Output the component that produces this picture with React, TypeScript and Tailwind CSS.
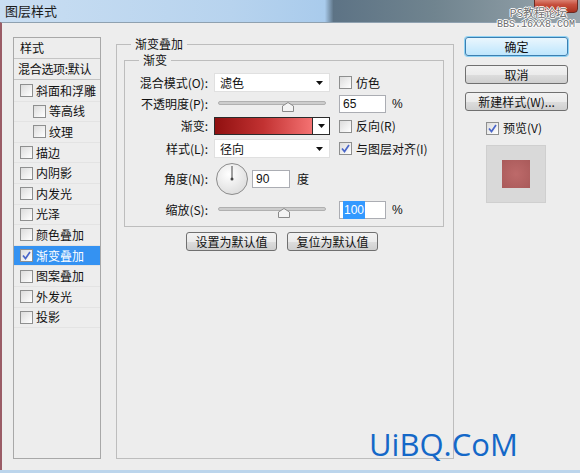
import React from 'react';

const cn = "font-['Noto_Sans_CJK_SC','Microsoft_YaHei',sans-serif]";

interface BoxProps {
  checked?: boolean;
}

const CheckBox: React.FC<BoxProps> = ({ checked }) => (
  <span className="w-[13px] h-[13px] shrink-0 border border-[#8e8f8f] bg-[linear-gradient(135deg,#dcdcdc,#ffffff)] flex items-center justify-center">
    {checked && (
      <svg width="9" height="9" viewBox="0 0 9 9">
        <path d="M1 4.5 L3.5 7.5 L8 1" fill="none" stroke="#4a66c9" strokeWidth="1.7" />
      </svg>
    )}
  </span>
);

const Arrow = () => (
  <svg width="7" height="4" viewBox="0 0 7 4">
    <path d="M0 0 H7 L3.5 4 Z" fill="#111" />
  </svg>
);

const Select: React.FC<{ value: string }> = ({ value }) => (
  <div className="w-[116px] h-[19px] bg-white border border-[#e0e0e0] flex items-center justify-between pl-[5px] pr-[6px] text-[12px] text-[#111]">
    <span>{value}</span>
    <Arrow />
  </div>
);

const Slider: React.FC<{ pct: number }> = ({ pct }) => (
  <div className="w-[116px] h-full px-[4px] flex items-center">
    <div className="relative w-full h-[4px] rounded-full bg-[#cdcdcd] border border-[#b0b0b0] -mt-[3px]">
      <svg
        className="absolute top-[0px]"
        style={{ left: `calc(${pct}% - 6px)` }}
        width="12"
        height="10"
        viewBox="0 0 12 10"
      >
        <path d="M6 0.5 L11.5 4 V9.5 H0.5 V4 Z" fill="#f4f4f4" stroke="#8a8a8a" />
      </svg>
    </div>
  </div>
);

const Field: React.FC<{ w: string; children: React.ReactNode }> = ({ w, children }) => (
  <div className={`${w} h-[18px] bg-white border border-[#abadb3] flex items-center pl-[3px] text-[12px] text-[#111] font-['Liberation_Sans',sans-serif]`}>
    {children}
  </div>
);

const Label: React.FC<{ children: React.ReactNode }> = ({ children }) => (
  <div className="w-[83px] mr-[6px] text-right text-[12px] text-[#111] whitespace-nowrap">{children}</div>
);

const WinButton: React.FC<{ label: string; primary?: boolean; w?: string }> = ({ label, primary, w = 'w-[103px]' }) => (
  <div
    className={`${w} h-[19px] rounded-[3px] flex items-center justify-center text-[12px] text-[#111] border ${
      primary
        ? 'border-[#3c7fb1] bg-[linear-gradient(#eaf6fd,#bee6fd)] shadow-[0_0_0_1px_#8fd3f5]'
        : 'border-[#707070] bg-[linear-gradient(#f2f2f2_0%,#ebebeb_50%,#dddddd_51%,#cfcfcf_100%)]'
    }`}
  >
    {label}
  </div>
);

const styleItems: { name: string; indent?: boolean; checked?: boolean; selected?: boolean }[] = [
  { name: '斜面和浮雕' },
  { name: '等高线', indent: true },
  { name: '纹理', indent: true },
  { name: '描边' },
  { name: '内阴影' },
  { name: '内发光' },
  { name: '光泽' },
  { name: '颜色叠加' },
  { name: '渐变叠加', checked: true, selected: true },
  { name: '图案叠加' },
  { name: '外发光' },
  { name: '投影' },
];

export default function App() {
  return (
    <div className={`relative w-[580px] h-[473px] overflow-hidden bg-[#bcd5ec] ${cn}`}>
      {/* title bar */}
      <div className="h-[22px] flex items-center pl-[5px] text-[13px] text-[#1b1b1b] bg-[linear-gradient(90deg,#c9def2_0%,#b7d3ee_40%,#a9cbec_56%,#5d7385_57.5%,#70848f_75%,#9aa7ae_100%)]">
        图层样式
      </div>
      <div className="absolute top-[-4px] right-[2px] w-[44px] h-[17px] rounded-[4px] border border-[#6b2a22] bg-[linear-gradient(#e8a294,#c7503e_50%,#a8321f)]" />
      <div className="absolute top-[5px] right-[5px] flex flex-col items-end text-[#6e6e6e] font-['Liberation_Mono',monospace] [text-shadow:1px_0_0_#fff,-1px_0_0_#fff,0_1px_0_#fff,0_-1px_0_#fff]">
        <span className={`${cn} mr-[8px] text-[11px] leading-[14px]`}>PS教程论坛</span>
        <span className="text-[10px] leading-[11px]">BBS.16XX8.COM</span>
      </div>

      {/* body */}
      <div className="h-[448px] bg-[#ededed] border-t border-[#8fa1b0] border-l-2 border-l-[#9a5c66] flex pl-[11px] pt-[14px]">
        {/* styles list */}
        <div className="w-[88px] h-[422px] border border-[#a8a8a8] flex flex-col text-[12px] text-[#111]">
          <div className="h-[21px] shrink-0 flex items-center pl-[6px] border-b border-[#c4c4c4]">样式</div>
          <div className="h-[21px] shrink-0 flex items-center pl-[4px] border-b border-[#c4c4c4] whitespace-nowrap tracking-[-0.3px]">
            混合选项:默认
          </div>
          <div className="mt-[1px] flex flex-col">
            {styleItems.map((it) => (
              <div
                key={it.name}
                className={`h-[20.6px] flex items-center gap-[3px] border-b border-[#e3e3e3] ${
                  it.indent ? 'pl-[19px]' : 'pl-[6px]'
                } ${it.selected ? 'bg-[#3492f2] text-white' : ''}`}
              >
                <CheckBox checked={it.checked} />
                <span>{it.name}</span>
              </div>
            ))}
          </div>
        </div>

        {/* gradient overlay settings */}
        <fieldset className="ml-[15px] w-[338px] h-[422px] border border-[#bdbdbd] text-[12px] text-[#111]">
          <legend className="ml-[14px] px-[4px] leading-[14px] text-[12px]">渐变叠加</legend>
          <fieldset className="mt-[2px] ml-[7px] mr-[9px] border border-[#bdbdbd] pt-[5px] pb-[4px]">
            <legend className="ml-[14px] px-[4px] leading-[14px]">渐变</legend>

            <div className="h-[21px] flex items-center">
              <Label>混合模式(O):</Label>
              <Select value="滤色" />
              <div className="ml-[9px] flex items-center gap-[4px]">
                <CheckBox />
                <span>仿色</span>
              </div>
            </div>

            <div className="h-[22px] flex items-center">
              <Label>不透明度(P):</Label>
              <Slider pct={65} />
              <div className="ml-[9px]">
                <Field w="w-[47px]">65</Field>
              </div>
              <span className="ml-[6px] font-['Liberation_Sans',sans-serif]">%</span>
            </div>

            <div className="h-[22px] flex items-center">
              <Label>渐变:</Label>
              <div className="w-[116px] h-[18px] flex border border-[#2b2b2b]">
                <div className="flex-1 bg-[linear-gradient(90deg,#901010,#c23232_50%,#f47272)]" />
                <div className="w-[17px] bg-white border-l border-[#2b2b2b] flex items-center justify-center">
                  <Arrow />
                </div>
              </div>
              <div className="ml-[9px] flex items-center gap-[4px]">
                <CheckBox />
                <span>反向(R)</span>
              </div>
            </div>

            <div className="h-[23px] flex items-center">
              <Label>样式(L):</Label>
              <Select value="径向" />
              <div className="ml-[9px] flex items-center gap-[4px]">
                <CheckBox checked />
                <span className="whitespace-nowrap">与图层对齐(I)</span>
              </div>
            </div>

            <div className="h-[38px] flex items-center">
              <Label>角度(N):</Label>
              <svg width="34" height="34" viewBox="0 0 34 34" className="ml-[1px]">
                <defs>
                  <radialGradient id="dial" cx="40%" cy="35%" r="70%">
                    <stop offset="0%" stopColor="#ffffff" />
                    <stop offset="100%" stopColor="#dcdcdc" />
                  </radialGradient>
                </defs>
                <circle cx="17" cy="17" r="15.5" fill="url(#dial)" stroke="#8c8c8c" />
                <line x1="17" y1="17" x2="17" y2="4" stroke="#444" strokeWidth="1" />
                <circle cx="17" cy="17" r="1.5" fill="#444" />
              </svg>
              <div className="ml-[3px]">
                <Field w="w-[38px]">90</Field>
              </div>
              <span className="ml-[7px]">度</span>
            </div>

            <div className="h-[24px] flex items-center">
              <Label>缩放(S):</Label>
              <Slider pct={61} />
              <div className="ml-[9px]">
                <Field w="w-[47px]">
                  <span className="bg-[#3399ff] text-white px-[1px]">100</span>
                </Field>
              </div>
              <span className="ml-[6px] font-['Liberation_Sans',sans-serif]">%</span>
            </div>
          </fieldset>

          <div className="mt-[5px] flex justify-center gap-[10px] pr-[6px]">
            <WinButton label="设置为默认值" w="w-[91px]" />
            <WinButton label="复位为默认值" w="w-[91px]" />
          </div>
        </fieldset>

        {/* right column */}
        <div className="ml-[11px] w-[103px] flex flex-col text-[12px] text-[#111]">
          <WinButton label="确定" primary />
          <div className="mt-[9px]">
            <WinButton label="取消" />
          </div>
          <div className="mt-[8px]">
            <WinButton label="新建样式(W)..." />
          </div>
          <div className="mt-[8px] ml-[21px] flex items-center gap-[4px]">
            <CheckBox checked />
            <span>预览(V)</span>
          </div>
          <div className="mt-[8px] ml-[21px] w-[60px] h-[58px] bg-[#d9d9d9] border border-[#cfcfcf] flex items-center justify-center">
            <div className="w-[28px] h-[28px] bg-[radial-gradient(circle,#bd6a6a,#a95a5a)]" />
          </div>
        </div>
      </div>

      {/* watermark */}
      <div className="absolute left-[369px] top-[429px] text-[31px] leading-none text-[#1468c8] font-['Open_Sans',sans-serif]">
        UiBQ.CoM
      </div>
    </div>
  );
}
